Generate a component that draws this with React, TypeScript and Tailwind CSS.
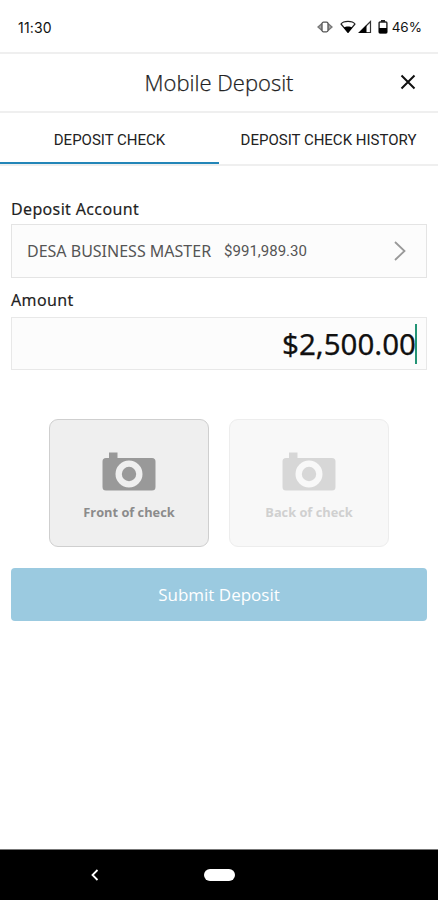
import { clsx } from 'clsx';

const sides = [
  { label: 'Front of check', enabled: true },
  { label: 'Back of check', enabled: false },
];

function StatusIcons() {
  return (
    <div className="flex items-center">
      <svg width="16" height="12" viewBox="0 0 16 12" fill="none" stroke="#777" strokeWidth="1.3">
        <path d="M5 2.500 1 6l4 3.500M11 2.500 15 6l-4 3.500" fill="#aaa" />
        <rect x="5" y="1.200" width="6" height="9.600" rx="1.500" fill="#fff" stroke="#555" />
      </svg>
      <svg className="ml-[7px]" width="16" height="14" viewBox="0 0 16 14">
        <path d="M1 4C3.500 .4 12.500 .4 15 4L8 12.400Z" fill="#fff" stroke="#222" strokeWidth="1.200" strokeLinejoin="round" />
        <path d="M3.600 7.600C6 6 10 6 12.400 7.600L8 13Z" fill="#000" />
      </svg>
      <svg className="ml-[2px]" width="14" height="14" viewBox="0 0 14 14">
        <path d="M1.500 12.500 12.500 1.500v11Z" fill="#fff" stroke="#333" strokeWidth="1.2" />
        <path d="M.5 13 8.500 5v8Z" fill="#000" />
      </svg>
      <svg className="ml-[6px]" width="10" height="14" viewBox="0 0 10 14">
        <path d="M3 0h4v2H3z" fill="#222" />
        <rect x="1.100" y="2" width="7.800" height="11" rx="1" fill="#fff" stroke="#222" strokeWidth="1.400" />
        <path d="M1 8h8v5H1z" fill="#000" />
      </svg>
    </div>
  );
}

function CameraIcon() {
  return (
    <svg width="54" height="39" viewBox="0 0 54 39" fill="currentColor">
      <path
        fillRule="evenodd"
        d="M7 .5h8.500v5.500H50a3.500 3.500 0 0 1 3.500 3.500V35a3.500 3.500 0 0 1-3.500 3.500H4A3.500 3.500 0 0 1 .5 35V9.500A3.500 3.500 0 0 1 4 6h3ZM27 8.500a13.500 13.500 0 1 0 0 27 13.500 13.500 0 0 0 0-27Z"
      />
      <circle cx="27" cy="22" r="7.200" />
    </svg>
  );
}

export default function App() {
  return (
    <div className="flex h-[900px] w-[438px] flex-col bg-white font-['Open_Sans',sans-serif] text-[#222]">
      <div className="flex h-[52px] items-center pl-[18px] pr-[16px] pt-[2px] font-['Inter',sans-serif] text-[#111]">
        <span className="flex-1 text-[14px] tracking-[0.2px]">11:30</span>
        <StatusIcons />
        <span className="ml-[4px] text-[13.500px]">46%</span>
      </div>

      <header className="relative flex h-[61px] items-center justify-center border-y-2 border-[#efefef]">
        <h1 className="text-[22px] font-light text-[#222] [-webkit-text-stroke:0.25px_#222]">Mobile Deposit</h1>
        <button className="absolute right-[22px] top-[20px]" aria-label="Close">
          <svg width="16" height="16" viewBox="0 0 16 16" stroke="#111" strokeWidth="2">
            <path d="M1.500 1.500l13 13M14.500 1.500l-13 13" />
          </svg>
        </button>
      </header>

      <nav className="flex h-[53px] border-b-2 border-[#efefef] font-['Roboto',sans-serif] text-[15px] text-[#222]">
        <button className="h-[51px] w-[219px] border-b-2 border-[#2386b8] pt-[5px]">DEPOSIT CHECK</button>
        <button className="h-[51px] w-[219px] pb-[2px] pt-[5px]">DEPOSIT CHECK HISTORY</button>
      </nav>

      <main className="flex flex-1 flex-col px-[11px]">
        <label className="mt-[32px] h-[26px] font-['Noto_Sans',sans-serif] text-[16px] leading-[22px] tracking-[0.35px] [-webkit-text-stroke:0.15px_#222]">
          Deposit Account
        </label>
        <div className="flex h-[54px] items-center border border-[#e4e4e4] bg-[#fcfcfc] pl-[15px] pr-[20px]">
          <span className="font-['Noto_Sans',sans-serif] text-[16px] text-[#555]">DESA BUSINESS MASTER</span>
          <span className="ml-[13px] flex-1 font-['Roboto',sans-serif] text-[15px] text-[#555]">$991,989.30</span>
          <svg width="12" height="20" viewBox="0 0 12 20" fill="none" stroke="#999" strokeWidth="1.800">
            <path d="M1 1l9.500 9L1 19" />
          </svg>
        </div>

        <label className="mt-[11px] h-[28px] font-['Noto_Sans',sans-serif] text-[16px] leading-[22px] tracking-[0.35px] [-webkit-text-stroke:0.15px_#222]">
          Amount
        </label>
        <div className="flex h-[53px] items-center justify-end border border-[#e8e8e8] bg-[#fcfcfc] pr-[9px]">
          <span className="mr-[-1px] pt-[2px] font-['Noto_Sans',sans-serif] text-[29.500px] text-[#111] [-webkit-text-stroke:0.25px_#111]">
            $2,500.00
          </span>
          <span className="h-[40px] w-[2px] bg-[#239475]" />
        </div>

        <div className="mt-[49px] flex gap-[20px] pl-[38px]">
          {sides.map((side) => (
            <button
              key={side.label}
              disabled={!side.enabled}
              className={clsx(
                'flex h-[128px] w-[160px] flex-col items-center rounded-[9px] border pt-[32px]',
                side.enabled
                  ? 'border-[#cfcfcf] bg-[#efefef] text-[#999]'
                  : 'border-[#ededed] bg-[#f8f8f8] text-[#d7d7d7]',
              )}
            >
              <CameraIcon />
              <span
                className={clsx(
                  'mt-[11px] text-[12.800px] font-bold leading-[20px]',
                  side.enabled ? 'text-[#8b8b8b]' : 'text-[#d0d0d0]',
                )}
              >
                {side.label}
              </span>
            </button>
          ))}
        </div>

        <button className="mt-[21px] h-[53px] rounded-[4px] bg-[#9bcae0] text-[17px] text-white">
          Submit Deposit
        </button>
      </main>

      <footer className="flex h-[51px] items-center border-t border-[#777] bg-black pl-[91px]">
        <svg width="8" height="12" viewBox="0 0 8 12" fill="none" stroke="#fff" strokeWidth="1.800">
          <path d="M6.500 1 1.500 6l5 5" />
        </svg>
        <span className="ml-[105px] h-[12px] w-[31px] rounded-full bg-white" />
      </footer>
    </div>
  );
}
